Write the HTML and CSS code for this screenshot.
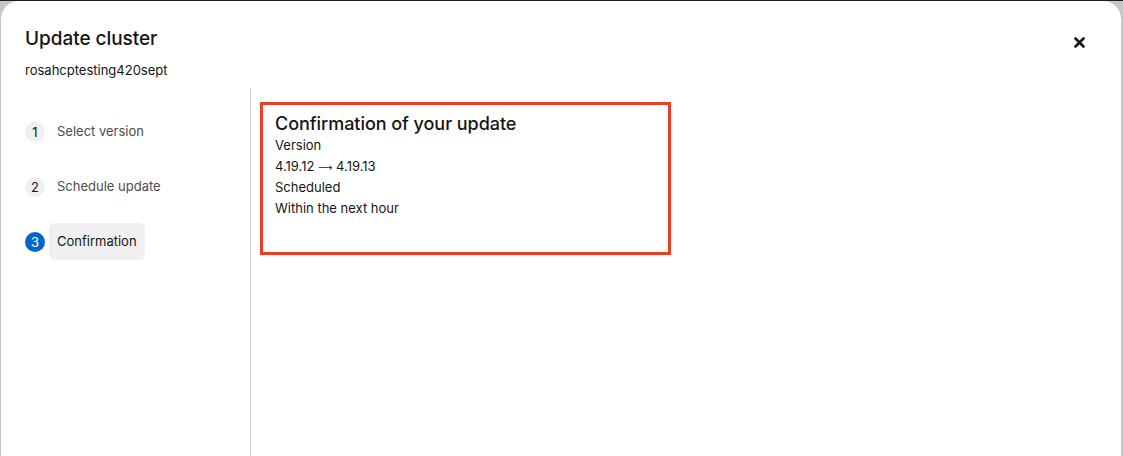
FILE: index.html
```html
<!DOCTYPE html>
<html lang="en">
<head>
<meta charset="UTF-8">
<meta name="viewport" content="width=device-width, initial-scale=1.0">
<title>Update cluster</title>
<link rel="stylesheet" href="styles.css">
</head>
<body>

<div class="modal">
    <div class="modal-header">
        <div>
            <h2 class="modal-title">Update cluster</h2>
            <p class="modal-subtitle">rosahcptesting420sept</p>
        </div>
        <button class="close-btn" aria-label="Close">
            <svg width="11" height="11" viewBox="0 0 11 11">
                <path d="M1.5 1.5 L9.5 9.5 M9.5 1.5 L1.5 9.5" stroke="#151515" stroke-width="2.6" stroke-linecap="round"/>
            </svg>
        </button>
    </div>

    <div class="wizard">
        <nav class="wizard-nav">
            <div class="step">
                <span class="step-num">1</span>
                <span class="step-label">Select version</span>
            </div>
            <div class="step">
                <span class="step-num">2</span>
                <span class="step-label">Schedule update</span>
            </div>
            <div class="step current">
                <span class="step-num">3</span>
                <span class="step-label">Confirmation</span>
            </div>
        </nav>

        <div class="wizard-body">
            <div class="confirm-box">
                <h3>Confirmation of your update</h3>
                <p>Version</p>
                <p>4.19.12 <span class="arrow">&#10230;</span> 4.19.13</p>
                <p>Scheduled</p>
                <p>Within the next hour</p>
            </div>
        </div>
    </div>
</div>

</body>
</html>
```

FILE: styles.css
```css
/* page behind the modal */
html, body {
    height: 100%;
}

body {
    margin: 0;
    padding: 0;
    font-family: Inter, "Noto Sans", sans-serif;
    color: #151515;
    background-color: #c6c6c6;
    border-top: 1px solid #1f1f1f;
    box-sizing: border-box;
    overflow: hidden;
}

.modal {
    margin: 0 2px 0 1px;
    height: 100%;
    background-color: #fff;
    border-radius: 18px 18px 0 0;
    display: flex;
    flex-direction: column;
}

.modal-header {
    display: flex;
    justify-content: space-between;
    align-items: flex-start;
    padding: 26px 36px 0 24px;
}

.modal-title {
    margin: 0;
    font-size: 19px;
    font-weight: 500;
    line-height: 24px;
    letter-spacing: -0.05px;
}

.modal-subtitle {
    margin: 10px 0 0;
    font-size: 13px;
    line-height: 18px;
}

.close-btn {
    margin-top: 10px;
    padding: 0;
    border: none;
    background: none;
    cursor: pointer;
    display: flex;
}

.wizard {
    flex: 1;
    display: flex;
    margin-top: 9px;
}

.wizard-nav {
    width: 250px;
    flex-shrink: 0;
    border-right: 1px solid #d2d2d2;
    padding: 25px 0 0 24px;
    box-sizing: border-box;
    display: flex;
    flex-direction: column;
    gap: 18px;
}

.step {
    display: flex;
    align-items: center;
    gap: 4px;
}

.step-num {
    width: 20px;
    height: 20px;
    border-radius: 50%;
    background-color: #f0f0f0;
    color: #151515;
    font-size: 13px;
    display: flex;
    align-items: center;
    justify-content: center;
}

.step-label {
    padding: 9px 8px;
    border-radius: 6px;
    font-size: 13px;
    line-height: 19px;
    color: #4d4d4d;
}

.step.current .step-num {
    background-color: #0066cc;
    color: #fff;
}

.step.current .step-label {
    background-color: #f0f0f0;
    color: #151515;
}

.wizard-body {
    flex: 1;
    padding: 14px 9px;
}

.confirm-box {
    width: 411px;
    height: 153px;
    box-sizing: border-box;
    border: 3px solid #ea3f27;
    padding: 8px 12px;
}

.confirm-box h3 {
    margin: 0;
    font-size: 18px;
    font-weight: 500;
    line-height: 22px;
    letter-spacing: -0.05px;
}

.confirm-box p {
    margin: 0;
    font-size: 13px;
    line-height: 21px;
    height: 21px;
}

.arrow {
    font-family: "DejaVu Sans", sans-serif;
    font-size: 10px;
    line-height: 0;
}
```
